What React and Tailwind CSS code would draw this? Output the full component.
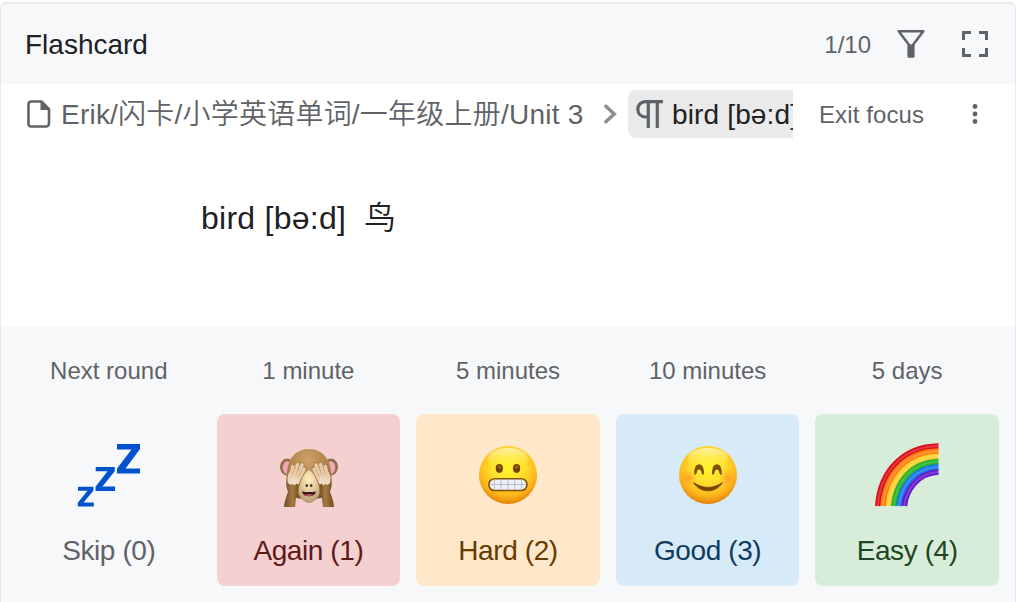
function Zzz() {
  return (
    <svg viewBox="0 0 100 90" className="ml-[2px] h-[90px] w-[100px]" fill="#0052cf">
      <path d="M57 14h23v5L65.500 38.500H80V43.500H57v-5L71.500 19.500H57zM35.700 37h19v4.300L42.500 56.500H55V61H35.500v-4.300L47.500 41.300H35.700zM18 56.700h15.500v3.800L23.500 72.500h10.300v4H17.800v-3.700L27.500 60.700H18z" />
    </svg>
  );
}

function Monkey() {
  const hand = (
    <>
      <path d="M28.500 60l-1-6 11-1c-.5 7-2.700 14-3.500 24H24c.5-7 3-12 4.500-17z" fill="url(#arm)" />
      <path d="M30.500 46L32.500 36.500M34 44L37.200 34.500M37 45L42 34.500M39.500 48L43.900 38.500" stroke="#a97c51" strokeWidth="4.600" strokeLinecap="round" />
      <path d="M28 45c1-3 2.500-4 6-5l8 4c-1.800 4-1.800 7.500-3.700 10.500l-2-1-1.600 2-2-1.700-2 1.200L28 53c-1-3-.7-5.500 0-8z" fill="url(#hand)" />
      <path d="M30.700 46.500L32.700 36.500M34.200 45L37.400 34.700M37.200 46L42 34.900M39.700 48L43.900 39" stroke="#e8cba7" strokeWidth="3.500" strokeLinecap="round" />
      <path d="M32.500 44L35 37.500M36 44.500L39.300 37M38.800 46L42.300 39" stroke="#c79d76" strokeWidth=".7" strokeLinecap="round" />
    </>
  );
  return (
    <svg viewBox="0 0 100 90" className="ml-[3px] h-[90px] w-[100px]">
      <defs>
        <radialGradient id="fur" cx=".48" cy=".22" r=".75">
          <stop offset="0" stopColor="#cda168" />
          <stop offset=".6" stopColor="#ad8046" />
          <stop offset="1" stopColor="#755126" />
        </radialGradient>
        <radialGradient id="muzzle" cx=".5" cy=".3" r=".7">
          <stop offset="0" stopColor="#fff0bd" />
          <stop offset=".6" stopColor="#dfc49a" />
          <stop offset="1" stopColor="#b3946a" />
        </radialGradient>
        <linearGradient id="hand" x1="0" y1="0" x2=".3" y2="1">
          <stop offset="0" stopColor="#e8cba7" />
          <stop offset="1" stopColor="#f2dfcd" />
        </linearGradient>
        <linearGradient id="arm">
          <stop offset="0" stopColor="#714d20" />
          <stop offset=".6" stopColor="#a57943" />
          <stop offset="1" stopColor="#76501f" />
        </linearGradient>
      </defs>
      <ellipse cx="27" cy="37" rx="7" ry="8.500" fill="#8b704d" />
      <ellipse cx="71" cy="37" rx="7" ry="8.500" fill="#8b704d" />
      <ellipse cx="27.300" cy="37.500" rx="4.600" ry="6.300" fill="#f3a5b5" />
      <ellipse cx="70.700" cy="37.500" rx="4.600" ry="6.300" fill="#f3a5b5" />
      <path d="M49 19c-12 0-20 8-21.500 20-1 9-3 17 1.500 24 4 5 11 6 20 6s16-1 20-6c4.500-7 2.500-15 1.500-24C69 27 61 19 49 19z" fill="url(#fur)" />
      <path d="M49 40c-4 2-7 8-9 14-1.500 4-2.500 9-.7 12C41.500 69 45 73 49 73s7.500-4 9.700-7C60.500 63 59.500 58 58 54c-2-6-5-12-9-14z" fill="url(#muzzle)" />
      <ellipse cx="46.800" cy="55.500" rx="1.300" ry="1.500" fill="#4d3425" />
      <ellipse cx="51.200" cy="55.500" rx="1.300" ry="1.500" fill="#4d3425" />
      <path d="M42 61.200c4 1.200 10 1.200 14 0-.5 3.300-3 5-7 5s-6.500-1.700-7-5z" fill="#381719" />
      <path d="M44.500 65c2-1.400 7-1.400 9 0-2 1.500-7 1.500-9 0z" fill="#b25252" />
      <g>{hand}</g>
      <g transform="matrix(-1 0 0 1 98 0)">{hand}</g>
    </svg>
  );
}

function FaceBase({ id, children }) {
  return (
    <svg viewBox="0 0 100 90" className="ml-1 h-[90px] w-[100px]">
      <defs>
        <radialGradient id={id} cx=".5" cy=".36" r=".66">
          <stop offset="0" stopColor="#fff52f" />
          <stop offset=".42" stopColor="#ffe12d" />
          <stop offset=".75" stopColor="#fdb71d" />
          <stop offset="1" stopColor="#e37a08" />
        </radialGradient>
        <linearGradient id={id + "-shine"} x1="0" y1="0" x2="0" y2="1">
          <stop offset="0" stopColor="#fff" stopOpacity=".6" />
          <stop offset="1" stopColor="#fff23c" stopOpacity="0" />
        </linearGradient>
        <radialGradient id={id + "-blush"}>
          <stop offset="0" stopColor="#ff7f2c" stopOpacity=".6" />
          <stop offset="1" stopColor="#ff9b2c" stopOpacity="0" />
        </radialGradient>
      </defs>
      <circle cx="48" cy="45" r="29" fill={`url(#${id})`} />
      <ellipse cx="48" cy="28" rx="20" ry="10" fill={`url(#${id}-shine)`} />
      {children}
    </svg>
  );
}

function Grimace() {
  return (
    <FaceBase id="grimace">
      <ellipse cx="39.300" cy="38.500" rx="3.600" ry="4.400" fill="#744100" />
      <ellipse cx="56.600" cy="38.500" rx="3.600" ry="4.400" fill="#744100" />
      <ellipse cx="39.300" cy="37" rx="1.700" ry="1.800" fill="#9b6511" />
      <ellipse cx="56.600" cy="37" rx="1.700" ry="1.800" fill="#9b6511" />
      <rect x="28.900" y="48.700" width="38" height="11.800" rx="5.500" fill="#edf0f6" stroke="#80520c" strokeWidth="1.600" />
      <path d="M34.300 49.500v10M41 49.500v10M47.900 49.500v10M54.800 49.500v10M61.500 49.500v10M29.500 54.500h36.600" stroke="#a7abb8" strokeWidth=".7" />
    </FaceBase>
  );
}

function Smile() {
  return (
    <FaceBase id="smile">
      <circle cx="28" cy="48" r="9" fill="url(#smile-blush)" />
      <circle cx="68" cy="48" r="9" fill="url(#smile-blush)" />
      <path d="M34.200 43.500c0-5.500 1.700-9.300 4.900-9.300s5 3.800 5 9.300c0 1.500-1.900 1.500-2.300 0-.6-2.600-1.300-4-2.700-4s-2 1.400-2.600 4c-.4 1.500-2.300 1.500-2.300 0z" fill="#835008" />
      <path d="M52 43.500c0-5.500 1.700-9.300 4.900-9.300s5 3.800 5 9.300c0 1.500-1.900 1.500-2.300 0-.6-2.600-1.300-4-2.700-4s-2 1.400-2.600 4c-.4 1.500-2.300 1.500-2.300 0z" fill="#835008" />
      <path d="M33.600 52.600c8.800 6.400 20 6.400 28.800 0-3.400 5.500-8.900 8.200-14.400 8.200s-11-2.700-14.400-8.200z" fill="#744400" stroke="#744400" strokeWidth=".8" strokeLinejoin="round" />
    </FaceBase>
  );
}

const rainbowBands = [
  ["M17.800 76C20.500 41 43 16.800 78.500 16", "#dc0d17"],
  ["M23.100 76C25.500 45.500 45 22.100 78.500 21.200", "#ff7d0b"],
  ["M28.400 76C31 49 48 27.300 78.500 26.400", "#ffce2a"],
  ["M33.700 76C36 52.500 51 32.500 78.500 31.600", "#20b325"],
  ["M39 76C41 56 54.500 37.700 78.500 36.800", "#1577ef"],
  ["M44.300 76C46 60 57.500 43 78.500 42", "#6416ca"],
];

function Rainbow() {
  return (
    <svg viewBox="0 0 100 90" className="ml-[6px] h-[90px] w-[100px]">
      {rainbowBands.map(([d, color]) => (
        <g key={color} fill="none">
          <path d={d} stroke={color} strokeWidth="5.700" />
          <path d={d} stroke="#fff" strokeOpacity=".12" strokeWidth="2.600" />
          <path d={d} stroke="#fff" strokeOpacity=".1" strokeWidth="1" />
        </g>
      ))}
    </svg>
  );
}

const choices = [
  { time: "Next round", label: "Skip (0)", card: "text-[#5f6368]", Icon: Zzz },
  { time: "1 minute", label: "Again (1)", card: "bg-[#f4d0d0] text-[#601818]", Icon: Monkey },
  { time: "5 minutes", label: "Hard (2)", card: "bg-[#ffe7ca] text-[#663c00]", Icon: Grimace },
  { time: "10 minutes", label: "Good (3)", card: "bg-[#d7eaf8] text-[#103c62]", Icon: Smile },
  { time: "5 days", label: "Easy (4)", card: "bg-[#d8edd9] text-[#1e4620]", Icon: Rainbow },
];

export default function App() {
  return (
    <div className="h-[602px] w-[1016px] overflow-hidden bg-white pt-[2px] font-['Liberation_Sans','Noto_Sans_CJK_SC',sans-serif] text-[#202124]">
      <main className="flex h-[600px] flex-col overflow-hidden rounded-t-[6px] border-x border-t-2 border-[#e8eaed] bg-white">
        <header className="flex h-20 shrink-0 items-center bg-[#f7f8fa] pl-[24px] pr-[26px] text-[#5f6368]">
          <h1 className="pt-0.5 text-[28px] leading-8 text-[#202124]">Flashcard</h1>
          <span className="ml-auto pt-0.5 text-2xl">1/10</span>
          <svg className="ml-[26px] h-7 w-7" viewBox="0 0 28 28" fill="currentColor">
            <path d="M1.700 1.300h24.600L14 17.500z" fill="none" stroke="currentColor" strokeWidth="2.500" strokeLinejoin="round" />
            <path d="M10.400 14.500h7.200v11.700c0 1-.6 1.600-1.600 1.600h-4c-1 0-1.600-.6-1.600-1.600z" />
          </svg>
          <svg className="ml-9 h-7 w-7" viewBox="0 0 28 28" fill="none" stroke="currentColor" strokeWidth="3">
            <path d="M10 2.500H2.500V10M18 2.500h7.500V10M2.500 18v7.500H10M25.500 18v7.500H18" />
          </svg>
        </header>

        <nav className="flex h-[60px] shrink-0 items-center pl-[26px] pr-[29px] text-[28px] leading-8 text-[#5f6368]">
          <svg className="h-7 w-6 shrink-0" viewBox="0 0 24 28">
            <path d="M4 1.500h10.500L22 9v14.500a3 3 0 0 1-3 3H4a2.500 2.500 0 0 1-2.500-2.500V4A2.500 2.500 0 0 1 4 1.500z" fill="none" stroke="currentColor" strokeWidth="2.600" />
            <path d="M13.500 1.500V10H22z" fill="currentColor" />
          </svg>
          <span className="ml-[10px] w-[525px] shrink-0 whitespace-nowrap pt-0.5 font-[350] tracking-[0.22px]">Erik/闪卡/小学英语单词/一年级上册/Unit 3</span>
          <svg className="ml-[17px] h-6 w-4 shrink-0" viewBox="0 0 16 24" fill="none" stroke="#8e9094" strokeWidth="3.600">
            <path d="M1.800 3.200L11.200 12l-9.400 8.800" />
          </svg>
          <div className="ml-[9px] flex h-12 w-[165px] shrink-0 items-center overflow-hidden rounded-l-lg bg-[#e9ebea]">
            <svg className="ml-2 h-7 w-[27px] shrink-0" viewBox="0 0 27 28" fill="none" stroke="currentColor" strokeWidth="3.200">
              <path d="M27 1.600H9.500C4.800 1.600 1.800 5 1.800 9.300s3 7.700 7.700 7.700h2.800M12.300 1.600V28M21.300 1.600V28" />
            </svg>
            <span className="ml-[9px] shrink-0 whitespace-nowrap pt-0.5 tracking-[0.15px] text-[#202124]">bird [bə:d]</span>
          </div>
          <span className="ml-[26px] whitespace-nowrap pt-0.5 text-2xl tracking-[0.1px]">Exit focus</span>
          <svg className="ml-auto h-[22px] w-[22px] shrink-0" viewBox="0 0 22 22" fill="currentColor">
            <circle cx="11" cy="3.500" r="2.400" />
            <circle cx="11" cy="11" r="2.400" />
            <circle cx="11" cy="18.500" r="2.400" />
          </svg>
        </nav>

        <section className="flex-1 pl-[200px] pt-[54px] text-[32px] leading-10">
          <p className="flex">
            <span className="tracking-[0.25px]">bird [bə:d]</span>
            <span className="ml-[18px] font-[350]">鸟</span>
          </p>
        </section>

        <section className="grid h-[276px] shrink-0 grid-cols-5 gap-x-4 bg-[#f7f8fa] px-4">
          {choices.map(({ time, label, card, Icon }) => (
            <div key={label} className="flex flex-col items-center">
              <div className="flex h-[88px] items-center whitespace-nowrap pt-0.5 text-2xl text-[#5f6368]">{time}</div>
              <button className={`flex h-[172px] w-full flex-col items-center rounded-lg pt-4 ${card}`}>
                <Icon />
                <span className="mt-[15px] whitespace-nowrap text-[28px] leading-8 tracking-[-0.4px]">{label}</span>
              </button>
            </div>
          ))}
        </section>
      </main>
    </div>
  );
}
